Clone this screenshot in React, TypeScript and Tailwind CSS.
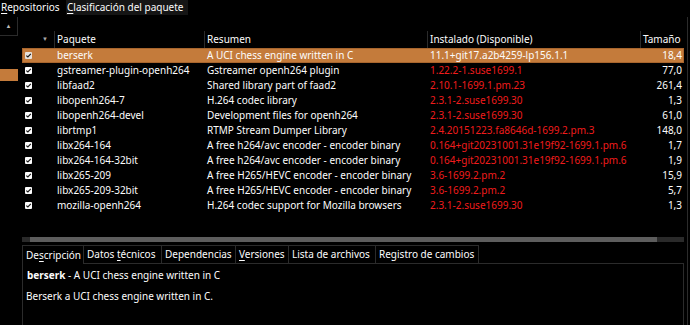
import React from 'react'

type Pkg = {
  name: string
  summary: string
  version: string
  size: string
}

const PACKAGES: Pkg[] = [
  { name: 'berserk', summary: 'A UCI chess engine written in C', version: '11.1+git17.a2b4259-lp156.1.1', size: '18,4' },
  { name: 'gstreamer-plugin-openh264', summary: 'Gstreamer openh264 plugin', version: '1.22.2-1.suse1699.1', size: '77,0' },
  { name: 'libfaad2', summary: 'Shared library part of faad2', version: '2.10.1-1699.1.pm.23', size: '261,4' },
  { name: 'libopenh264-7', summary: 'H.264 codec library', version: '2.3.1-2.suse1699.30', size: '1,3' },
  { name: 'libopenh264-devel', summary: 'Development files for openh264', version: '2.3.1-2.suse1699.30', size: '61,0' },
  { name: 'librtmp1', summary: 'RTMP Stream Dumper Library', version: '2.4.20151223.fa8646d-1699.2.pm.3', size: '148,0' },
  { name: 'libx264-164', summary: 'A free h264/avc encoder - encoder binary', version: '0.164+git20231001.31e19f92-1699.1.pm.6', size: '1,7' },
  { name: 'libx264-164-32bit', summary: 'A free h264/avc encoder - encoder binary', version: '0.164+git20231001.31e19f92-1699.1.pm.6', size: '1,9' },
  { name: 'libx265-209', summary: 'A free H265/HEVC encoder - encoder binary', version: '3.6-1699.2.pm.2', size: '15,9' },
  { name: 'libx265-209-32bit', summary: 'A free H265/HEVC encoder - encoder binary', version: '3.6-1699.2.pm.2', size: '5,7' },
  { name: 'mozilla-openh264', summary: 'H.264 codec support for Mozilla browsers', version: '2.3.1-2.suse1699.30', size: '1,3' },
]

function Check({ sel }: { sel?: boolean }) {
  return (
    <svg width="7" height="7" viewBox="0 0 7 7" className="block">
      <rect x="0" y="0" width="7" height="7" rx="1" fill={sel ? '#e8e2dc' : '#fcfcfc'} />
      <path d="M1.3 3.6 L2.9 5 L5.8 1.9" fill="none" stroke="#1b1b1b" strokeWidth="1.2" />
    </svg>
  )
}

// label with one mnemonic letter underlined
function Mnemonic({ label, u }: { label: string; u?: number }) {
  if (u === undefined) return <span className="whitespace-pre">{label}</span>
  return (
    <span className="whitespace-pre">
      {label.slice(0, u)}
      <span className="underline underline-offset-2">{label.slice(u, u + 1)}</span>
      {label.slice(u + 1)}
    </span>
  )
}

function Tab({ label, u, active, w }: { label: string; u?: number; active?: boolean; w: string }) {
  return (
    <div
      className={
        w +
        ' h-full pl-[3px] flex items-center border-t border-r border-[#2b2b2b] whitespace-nowrap ' +
        (active ? 'border-l bg-black' : 'border-b')
      }
    >
      <Mnemonic label={label} u={u} />
    </div>
  )
}

export default function App() {
  return (
    <div
      className="w-[690px] h-[325px] bg-black text-[#fcfcfc] text-[10px] leading-[13px] overflow-hidden flex flex-col"
      style={{ fontFamily: '"Noto Sans", "Open Sans", sans-serif' }}
    >
      {/* top tabs */}
      <div className="h-[17px] flex items-start whitespace-nowrap">
        <div className="w-[66px] h-[15px] pl-[1px] flex items-center">
          <Mnemonic label="Repositorios" u={0} />
        </div>
        <div className="w-[122px] h-[15px] pl-[1px] flex items-center bg-[#151515]">
          <Mnemonic label="Clasificación del paquete" u={0} />
        </div>
      </div>

      <div className="flex flex-1 min-h-0">
        {/* left panel */}
        <div className="w-[18px] flex flex-col">
          <div className="h-[19px] border-r border-b border-[#2b2b2b] flex items-center justify-center">
            <span className="text-[6px] text-[#bbb]">▲</span>
          </div>
          <div className="h-[33px]" />
          <div className="h-[12px] bg-[#c47b3b]" />
        </div>

        {/* main */}
        <div className="flex-1 ml-[4px] mr-[2px] flex flex-col border-r border-[#2b2b2b]">
          <div className="h-[14px]" />
          {/* header */}
          <div className="h-[17px] flex items-center whitespace-nowrap">
            <div className="w-[33px] h-full border-r border-[#2b2b2b] flex items-center justify-end pr-[6px]">
              <span className="text-[6px] text-[#aaa]">▼</span>
            </div>
            <div className="w-[150px] h-full pl-[2px] flex items-center border-r border-[#2b2b2b]">Paquete</div>
            <div className="w-[223px] h-full pl-[2px] flex items-center border-r border-[#2b2b2b]">Resumen</div>
            <div className="w-[213px] h-full pl-[2px] flex items-center border-r border-[#2b2b2b]">Instalado (Disponible)</div>
            <div className="flex-1 h-full pl-[2px] flex items-center">Tamaño</div>
          </div>

          {/* rows */}
          <div className="flex flex-col h-[189px] mr-[3px]">
            {PACKAGES.map((p, i) => {
              const sel = i === 0
              return (
                <div
                  key={p.name}
                  className={
                    'h-[15px] shrink-0 flex items-center border whitespace-nowrap ' +
                    (sel ? 'bg-[#c47b3b] border-[#a8652d]' : 'border-transparent')
                  }
                >
                  <div className="w-[32px] pl-[2px] flex items-center">
                    <Check sel={sel} />
                  </div>
                  <div className="w-[150px] pl-[2px]">{p.name}</div>
                  <div className="w-[223px] pl-[2px]">{p.summary}</div>
                  <div className={'w-[213px] pl-[2px] ' + (sel ? 'text-[#fcfcfc]' : 'text-[#f01c1c]')}>
                    {p.version}
                  </div>
                  <div className="flex-1 text-right pr-[1px]">{p.size}</div>
                </div>
              )
            })}
          </div>

          {/* horizontal scrollbar */}
          <div className="h-[5px] mr-[3px] bg-[#2a2a2a] flex">
            <div className="ml-[8px] w-[627px] bg-[#5d5d5d]" />
          </div>

          {/* detail tabs */}
          <div className="mt-[3px] h-[19px] flex items-stretch">
            <Tab w="w-[62px]" label="Descripción" u={2} active />
            <Tab w="w-[78px]" label="Datos técnicos" u={6} />
            <Tab w="w-[74px]" label="Dependencias" />
            <Tab w="w-[53px]" label="Versiones" u={0} />
            <Tab w="w-[87px]" label="Lista de archivos" />
            <Tab w="w-[103px]" label="Registro de cambios" />
            <div className="flex-1 border-b border-[#2b2b2b] mr-[3px]" />
          </div>
          <div className="flex-1 border-l border-r border-[#2b2b2b] mr-[3px] pl-[4px] pt-[5px] whitespace-nowrap">
            <div>
              <span className="font-bold">berserk</span> - A UCI chess engine written in C
            </div>
            <div className="mt-[8px] -ml-[1px]">Berserk a UCI chess engine written in C.</div>
          </div>
        </div>
      </div>
    </div>
  )
}
